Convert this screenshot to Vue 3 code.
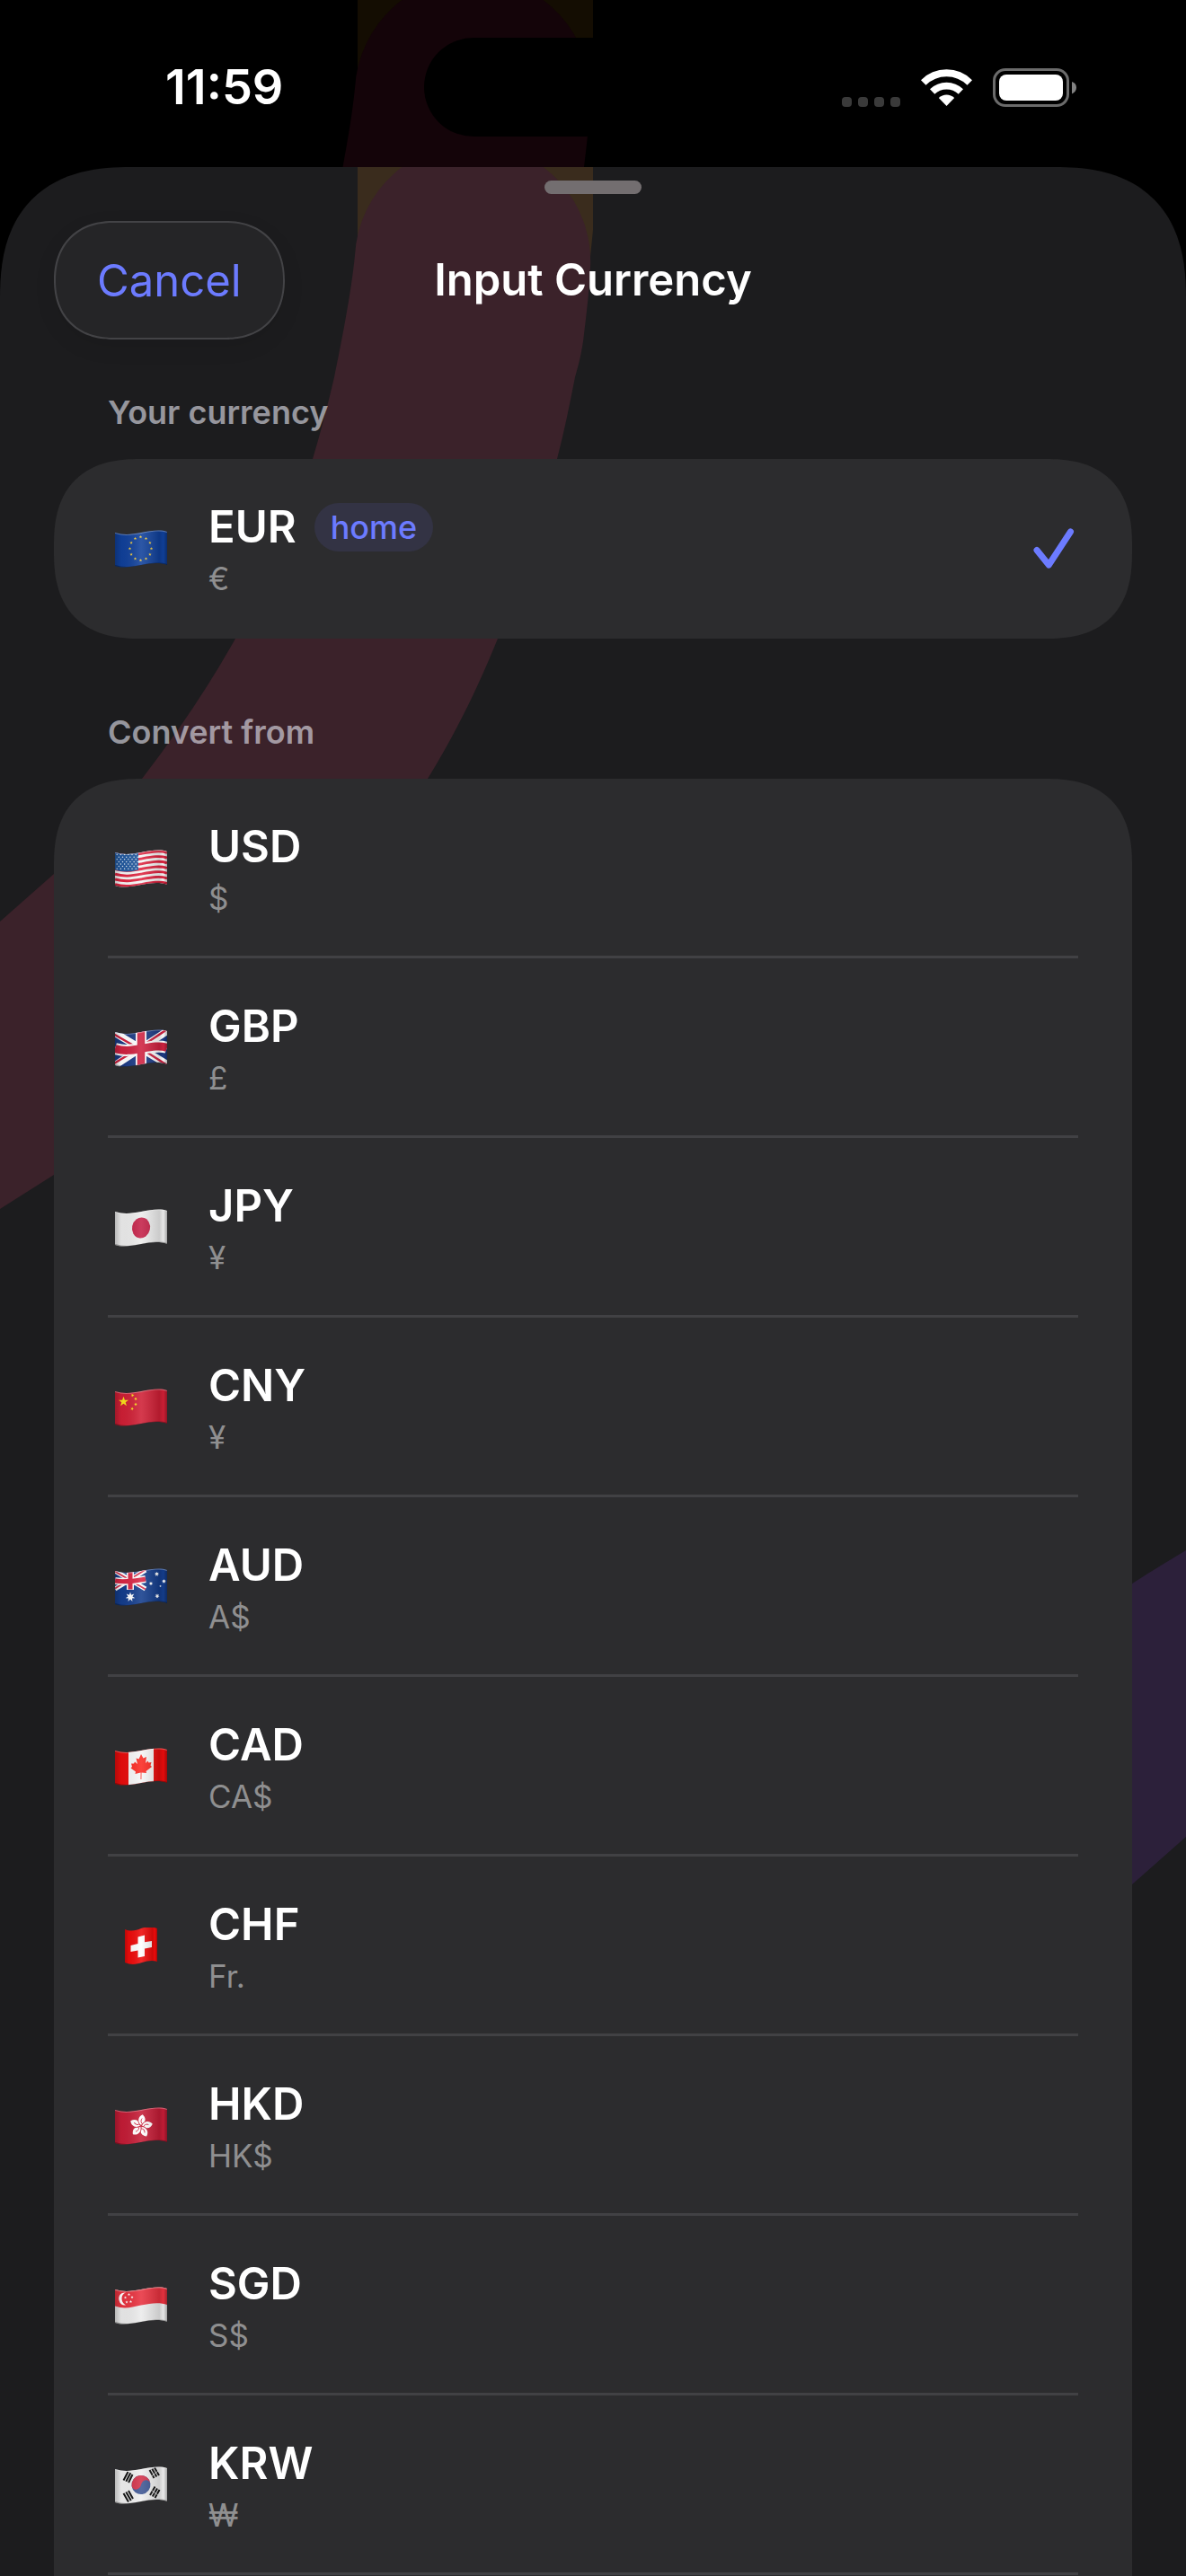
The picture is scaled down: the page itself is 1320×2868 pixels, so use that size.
<template>
  <div class="screen">
    <!-- shared shapes for the waving flags -->
    <svg class="defs" aria-hidden="true">
      <defs>
        <clipPath id="wave"><path d="M0 3C10 6 18 5 29 3S50 -1 58 2V39C50 36 40 37 29 39S8 43 0 40Z" /></clipPath>
        <clipPath id="wave-square"><path d="M11 2C18 5 24 3 29 1S42 -1 47 1V38C42 36 36 37 30 39S18 42 11 39Z" /></clipPath>
        <linearGradient id="shade" x1="0" x2="1" y1="0" y2="0">
          <stop offset="0" stop-color="#000" stop-opacity="0.22" />
          <stop offset="0.12" stop-color="#000" stop-opacity="0.04" />
          <stop offset="0.5" stop-color="#fff" stop-opacity="0.12" />
          <stop offset="0.85" stop-color="#000" stop-opacity="0.14" />
          <stop offset="0.93" stop-color="#000" stop-opacity="0.02" />
          <stop offset="1" stop-color="#000" stop-opacity="0.3" />
        </linearGradient>
        <path id="wave-line" d="M0 3C10 6 18 5 29 3S50 -1 58 2" fill="none" />
        <path id="star" d="M0 -1L0.24 -0.32L0.95 -0.31L0.38 0.12L0.59 0.81L0 0.4L-0.59 0.81L-0.38 0.12L-0.95 -0.31L-0.24 -0.32Z" />
        <path id="star7" d="M0 -1L0.2 -0.42L0.78 -0.62L0.45 -0.1L0.97 0.22L0.37 0.28L0.43 0.9L0 0.46L-0.43 0.9L-0.37 0.28L-0.97 0.22L-0.45 -0.1L-0.78 -0.62L-0.2 -0.42Z" />
      </defs>
    </svg>

    <header class="status-bar">
      <svg class="backdrop dim" viewBox="0 0 1320 2868" preserveAspectRatio="xMidYMin slice" aria-hidden="true">
        <path class="band-yellow" :d="bands.yellow" />
        <path class="band-red" :d="bands.red" />
      </svg>
      <time class="clock">11:59</time>
      <span class="island"></span>
      <div class="indicators">
        <svg width="65" height="11" viewBox="0 0 65 11" class="cell" aria-label="No signal">
          <rect v-for="n in 4" :key="n" :x="(n - 1) * 18" y="0" width="11" height="11" rx="4" fill="#3a3a3a" />
        </svg>
        <svg width="57" height="42" viewBox="0 0 57 42" fill="#fff" aria-label="Wi-Fi">
          <path d="M0 13.2A40 40 0 0 1 57 13.2L51.5 18.7A33 33 0 0 0 5.5 18.7Z" />
          <path d="M10 23.2A27 27 0 0 1 47 23.2L41.7 28.8A19 19 0 0 0 15.3 28.8Z" />
          <path d="M19.8 33A12.5 12.5 0 0 1 37.2 33L28.5 42Z" />
        </svg>
        <svg width="93" height="43" viewBox="0 0 93 43" aria-label="Battery full">
          <rect x="1.5" y="1.5" width="82" height="40" rx="12.5" fill="none" stroke="#6b6b6b" stroke-width="3" />
          <rect x="7" y="7" width="71" height="29" rx="8" fill="#fff" />
          <path d="M88 15C91 16 93 18 93 21.5S91 27 88 28.5Z" fill="#828282" />
        </svg>
      </div>
    </header>

    <main class="sheet">
      <svg class="backdrop" viewBox="0 0 1320 2868" preserveAspectRatio="xMidYMin slice" aria-hidden="true">
        <path class="band-yellow" :d="bands.yellow" />
        <path class="band-red" :d="bands.red" />
        <path class="band-purple" :d="bands.purple" />
      </svg>

      <span class="grabber"></span>
      <div class="nav">
        <button class="cancel" type="button">Cancel</button>
        <h1 class="title">Input Currency</h1>
      </div>

      <section v-for="group in groups" :key="group.label" class="group">
        <h2 class="group-label">{{ group.label }}</h2>
        <ul class="card">
          <li v-for="c in group.items" :key="c.code" class="item">
            <button class="row" type="button" :aria-pressed="selected === c.code" @click="selected = c.code">
              <svg class="flag" width="58" height="42" viewBox="0 0 58 42" aria-hidden="true">
                <g :clip-path="c.code === 'CHF' ? 'url(#wave-square)' : 'url(#wave)'">
                  <rect width="58" height="42" :fill="c.base" />

                  <g v-if="c.code === 'EUR'" fill="#f7cf3c">
                    <use v-for="n in 12" :key="n" href="#star" :transform="euStar(n)" />
                  </g>

                  <g v-else-if="c.code === 'USD'">
                    <use v-for="n in 7" :key="n" href="#wave-line" stroke="#df2440" stroke-width="2.85" :transform="`translate(0 ${(n - 1) * 5.7 + 1.4})`" />
                    <path d="M0 0H26V22.5C18 25 8 25 0 22.5Z" fill="#235a9f" />
                    <g fill="#dbe6f2">
                      <circle v-for="(s, i) in usStars" :key="i" :cx="s[0]" :cy="s[1]" r="0.75" />
                    </g>
                  </g>

                  <g v-else-if="c.code === 'GBP'">
                    <path d="M0 4L58 39M0 40L58 2" stroke="#fff" stroke-width="8" />
                    <path d="M-1 5.5L24 20M34 24.5L58 40M-1 38L22 24M34 16L58 0" stroke="#cf2140" stroke-width="2.5" />
                    <path d="M29 0V42" stroke="#fff" stroke-width="12" />
                    <use href="#wave-line" stroke="#fff" stroke-width="13" transform="translate(0 18.5)" />
                    <path d="M29 0V42" stroke="#cf2140" stroke-width="8.5" />
                    <use href="#wave-line" stroke="#cf2140" stroke-width="9" transform="translate(0 18.5)" />
                  </g>

                  <ellipse v-else-if="c.code === 'JPY'" cx="29" cy="21" rx="10" ry="11.5" transform="rotate(12 29 21)" fill="#c42148" />

                  <g v-else-if="c.code === 'CNY'" fill="#f8e01c">
                    <use href="#star" transform="translate(9.5 14.5) scale(5.8)" />
                    <use href="#star" transform="translate(19.5 7.5) rotate(20) scale(2)" />
                    <use href="#star" transform="translate(23 11.5) rotate(40) scale(2)" />
                    <use href="#star" transform="translate(23 17.5) scale(2)" />
                    <use href="#star" transform="translate(19 22.5) rotate(20) scale(2)" />
                  </g>

                  <g v-else-if="c.code === 'AUD'">
                    <path d="M0 3L34 23M0 23L34 2" stroke="#fff" stroke-width="5" />
                    <path d="M0 3.5L34 23.5M0 22.5L34 1.5" stroke="#d9304c" stroke-width="1.8" />
                    <path d="M17 0V24M0 14C12 16 22 14 34 12" stroke="#fff" stroke-width="8" fill="none" />
                    <path d="M17 0V23.5M0 14C12 16 22 14 34 12" stroke="#d92644" stroke-width="5" fill="none" />
                    <g fill="#fff">
                      <use href="#star7" transform="translate(17 32) scale(5.5)" />
                      <use href="#star7" transform="translate(46.5 6.5) scale(2.7)" />
                      <use href="#star7" transform="translate(40 17) scale(2.3)" />
                      <use href="#star7" transform="translate(54.5 14.5) scale(2.5)" />
                      <use href="#star7" transform="translate(47 31) scale(2.7)" />
                      <use href="#star" transform="translate(50.5 20) scale(1.4)" />
                    </g>
                  </g>

                  <g v-else-if="c.code === 'CAD'">
                    <rect x="15" width="28" height="42" fill="#f6f6f6" />
                    <path
                      d="M29 7L31.5 11.5L35 10L34 17L36.5 14.5L37.5 16.5L40.5 16L39.5 19.5L41 21L34.5 26L35 28L29.5 27.5L29.4 35H28.5L28.6 27.5L22.5 29L23 26.5L17.5 22.5L19 21L18 17.5L21 17.5L22 15.5L25 18L23.5 11.5L26.5 12.5Z"
                      fill="#fb2a22"
                    />
                  </g>

                  <path v-else-if="c.code === 'CHF'" d="M25.5 10.5L33 8.5V16.2L41 15V22L33 23.5V32L25.5 33.5V25.5L17.5 27V20L25.5 18Z" fill="#fff" />

                  <g v-else-if="c.code === 'HKD'">
                    <g v-for="n in 5" :key="n" :transform="`translate(29 21) rotate(${n * 72 + 8})`">
                      <path d="M0 -1C-5 -4 -5 -10 0 -13C3.5 -10.5 4.5 -7 2.8 -5C1.5 -3.8 0.2 -3 0 -1Z" fill="#fff" />
                      <path d="M0.3 -3C-1.2 -5 -1 -7 0 -8.5" stroke="#cf1b37" stroke-width="0.9" fill="none" />
                    </g>
                  </g>

                  <g v-else-if="c.code === 'SGD'">
                    <path d="M0 0H58V20C50 17 40 18 29 20.5S10 25 0 21.5Z" fill="#e8323f" />
                    <path d="M12 6.5C5.5 6 3.5 11 4.5 15C5.5 19 8.5 21 12 20.5C8.5 18.5 7.5 15.5 7.5 13C7.5 10 9 7.5 12 6.5Z" fill="#fff" />
                    <g fill="#fff">
                      <use href="#star" transform="translate(15.5 8.5) scale(1.7)" />
                      <use href="#star" transform="translate(11.5 12) scale(1.7)" />
                      <use href="#star" transform="translate(19 11.5) scale(1.7)" />
                      <use href="#star" transform="translate(13 17) scale(1.7)" />
                      <use href="#star" transform="translate(17.5 16.5) scale(1.7)" />
                    </g>
                  </g>

                  <g v-else-if="c.code === 'KRW'">
                    <g transform="rotate(-8 29 20.5)">
                      <circle cx="29" cy="20.5" r="10.5" fill="#3f5794" />
                      <path d="M18.5 20.5A10.5 10.5 0 0 1 39.5 20.5C38.5 14.5 31 15 29 20.5S19.5 26.5 18.5 20.5Z" fill="#d2324a" />
                    </g>
                    <g stroke="#111" stroke-width="2">
                      <path d="M9.5 15.5L14.5 6M12.3 16.7L17.3 7.2M15.1 18L19.5 9" />
                      <path d="M38.5 4L43.5 13M41.3 2.7L46.3 11.5M44 1.5L49 10" />
                      <path d="M9.5 30L15 39.5M12.3 28.5L17.8 38M15 27L20 36" />
                      <path d="M39 32L44.5 22.5M41.8 33.5L47 24.5M44.5 35L49.5 26" />
                    </g>
                    <path d="M40 11.5L48 5M40 26L48 32" stroke="#f1f1f1" stroke-width="0.8" />
                  </g>

                  <rect :x="c.code === 'CHF' ? 11 : 0" :width="c.code === 'CHF' ? 36 : 58" height="42" fill="url(#shade)" />
                  <template v-if="c.code !== 'CHF'">
                    <use href="#wave-line" stroke="#fff" stroke-opacity="0.3" stroke-width="2" />
                    <use href="#wave-line" stroke="#000" stroke-opacity="0.3" stroke-width="2" transform="translate(0 37)" />
                  </template>
                </g>
              </svg>

              <span class="info">
                <span class="code-line">
                  <span class="code">{{ c.code }}</span>
                  <span v-if="c.home" class="badge">home</span>
                </span>
                <span class="symbol">{{ c.symbol }}</span>
              </span>

              <svg v-if="selected === c.code" class="check" width="46" height="46" viewBox="0 0 46 46" aria-label="Selected">
                <path d="M4 24.5L17.3 41L41.5 4" fill="none" stroke="#6c7bff" stroke-width="7" stroke-linecap="round" stroke-linejoin="round" />
              </svg>
            </button>
          </li>
        </ul>
      </section>
    </main>
  </div>
</template>

<script setup>
import { ref } from 'vue'

const selected = ref('EUR')

const groups = [
  {
    label: 'Your currency',
    items: [{ code: 'EUR', symbol: '€', base: '#10409a', home: true }]
  },
  {
    label: 'Convert from',
    items: [
      { code: 'USD', symbol: '$', base: '#f6f6f6' },
      { code: 'GBP', symbol: '£', base: '#1c3a84' },
      { code: 'JPY', symbol: '¥', base: '#ececec' },
      { code: 'CNY', symbol: '¥', base: '#cf1f35' },
      { code: 'AUD', symbol: 'A$', base: '#143d8c' },
      { code: 'CAD', symbol: 'CA$', base: '#e80c0c' },
      { code: 'CHF', symbol: 'Fr.', base: '#ee0b0b' },
      { code: 'HKD', symbol: 'HK$', base: '#c41c36' },
      { code: 'SGD', symbol: 'S$', base: '#ebebeb' },
      { code: 'KRW', symbol: '₩', base: '#efefef' }
    ]
  }
]

// wide curved bands behind the status bar and the sheet
const bands = {
  yellow: 'M398 0H660V70L655 120H398Z',
  red: 'M395 98A131 131 0 0 1 657 112C656 136 653 161 650 186C648 205 644 220 640 234C634 264 628 295 620 325C603 392 581 458 554 525C533 577 508 629 476 681C391 828 266 975 60 1122L0 1160L-40 1182V876L0 840L60 787C96 752 131 716 158 681C198 629 233 577 262 525C299 458 328 392 348 325C357 295 365 264 372 234C379 200 391 140 395 98Z',
  purple: 'M1320 1540C1300 1552 1280 1564 1240 1590V1930L1260 1912L1320 1859Z'
}

function euStar(n) {
  const a = (n * Math.PI) / 6
  return `translate(${28.5 + 12 * Math.sin(a)} ${20.8 - 13 * Math.cos(a)}) scale(1.9)`
}

const usStars = []
for (let r = 0; r < 7; r++) {
  for (let k = 0; k < 6; k++) {
    const x = 2.2 + k * 4.2 + (r % 2) * 2.1
    if (x < 25.5) usStars.push([x, 5.6 + r * 2.6])
  }
}
</script>

<style>
body { margin: 0; background: #000; }
</style>

<style scoped>
.screen {
  display: flex;
  flex-direction: column;
  min-height: 100vh;
  background: #000;
  color: #fff;
  font-family: Inter, 'Liberation Sans', sans-serif;
}
.defs { position: absolute; width: 0; height: 0; }
.backdrop { position: absolute; top: 0; left: 0; width: 100%; height: 100%; }
.band-yellow { fill: #3a2c1d; }
.band-red { fill: #3b222a; }
.band-purple { fill: #2c203a; }
.dim .band-yellow { fill: #140d02; }
.dim .band-red { fill: #140409; }

/* Status bar */
.status-bar {
  position: relative;
  display: grid;
  grid-template-columns: 1fr 376px 1fr;
  align-items: center;
  padding: 42px 0 34px;
}
.status-bar > * { z-index: 1; }
.status-bar > .backdrop { z-index: 0; }
.clock { padding-left: 184px; font-size: 54px; line-height: 64px; font-weight: 600; }
.island { height: 110px; border-radius: 55px; background: #000; }
.indicators {
  display: flex;
  align-items: center;
  justify-content: flex-end;
  gap: 23px;
  padding-right: 122px;
}
.cell { align-self: flex-end; }

/* Sheet */
.sheet {
  position: relative;
  flex: 1;
  display: flex;
  flex-direction: column;
  box-sizing: border-box;
  padding: 15px 60px 0;
  overflow: hidden;
  border-radius: 120px 120px 0 0;
  background: #1c1c1e;
}
.sheet > * { position: relative; }
.sheet > .backdrop { position: absolute; }
.grabber { align-self: center; width: 108px; height: 15px; border-radius: 8px; background: #736e70; }
.nav {
  display: grid;
  grid-template-columns: 1fr auto 1fr;
  align-items: center;
  margin-top: 30px;
}
.cancel {
  justify-self: start;
  height: 132px;
  padding: 0 46px;
  border: 2px solid #434346;
  border-radius: 66px;
  background: #252527;
  box-shadow: 0 8px 24px rgba(0, 0, 0, 0.08);
  color: #6c7bff;
  font: inherit;
  font-size: 49px;
  cursor: pointer;
}
.title { margin: 0; font-size: 49px; line-height: 60px; font-weight: 600; }

.group { margin-top: 57px; }
.group + .group { display: flex; flex: 1; flex-direction: column; margin-top: 80px; }
.group-label {
  margin: 0 60px 28px;
  color: rgba(235, 235, 245, 0.6);
  font-size: 36px;
  line-height: 48px;
  font-weight: 600;
}
.card { margin: 0; padding: 0 60px; border-radius: 80px; background: #2c2c2e; list-style: none; }
.group + .group .card { flex: 1; border-radius: 80px 80px 0 0; }
.item { box-sizing: border-box; height: 200px; }
.group + .group .item { border-bottom: 3px solid #414144; }

.row {
  display: flex;
  align-items: center;
  box-sizing: border-box;
  width: 100%;
  height: 197px;
  padding: 2px 4px 0 8px;
  border: 0;
  background: none;
  color: inherit;
  font: inherit;
  text-align: left;
  cursor: pointer;
}
.flag { flex: none; margin-right: 46px; }
.info { display: flex; flex: 1; flex-direction: column; gap: 6px; }
.code-line { display: flex; align-items: center; gap: 20px; }
.code { font-size: 49px; line-height: 60px; font-weight: 600; }
.badge {
  padding: 0 18px;
  border-radius: 27px;
  background: #333344;
  color: #6c7bff;
  font-size: 36px;
  line-height: 54px;
  font-weight: 500;
}
.symbol { color: #8f8f90; font-size: 35px; line-height: 42px; }
.check { flex: none; }

/* continuous corners where the browser has them */
@supports (corner-shape: squircle) {
  .sheet { border-radius: 146px 146px 0 0; corner-shape: superellipse(1.3); }
  .card { border-radius: 96px; corner-shape: superellipse(1.3); }
  .group + .group .card { border-radius: 96px 96px 0 0; }
  .cancel { corner-shape: superellipse(1.15); }
}
</style>
